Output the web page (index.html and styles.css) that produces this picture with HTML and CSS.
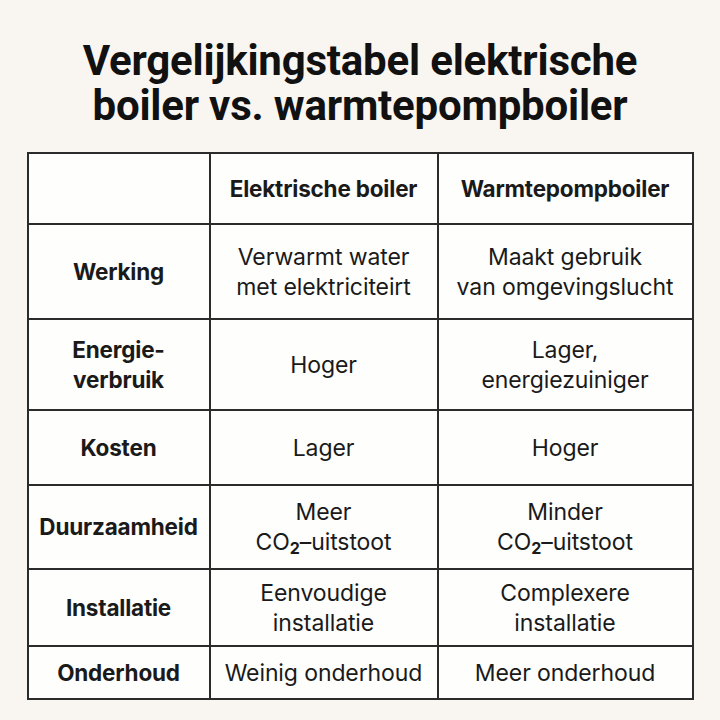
FILE: index.html
```html
<!DOCTYPE html>
<html lang="nl">
<head>
<meta charset="utf-8">
<title>Vergelijkingstabel</title>
<link rel="stylesheet" href="styles.css">
</head>
<body>
<main class="page">
  <h1 class="title">Vergelijkingstabel elektrische<br>boiler vs. warmtepompboiler</h1>
  <table class="cmp">
    <colgroup>
      <col class="c1"><col class="c2"><col class="c3">
    </colgroup>
    <thead>
      <tr class="r-head">
        <th></th>
        <th>Elektrische boiler</th>
        <th>Warmtepompboiler</th>
      </tr>
    </thead>
    <tbody>
      <tr class="r1">
        <th>Werking</th>
        <td>Verwarmt water<br>met elektriciteirt</td>
        <td>Maakt gebruik<br>van omgevingslucht</td>
      </tr>
      <tr class="r2">
        <th>Energie-<br>verbruik</th>
        <td>Hoger</td>
        <td>Lager,<br>energiezuiniger</td>
      </tr>
      <tr class="r3">
        <th>Kosten</th>
        <td>Lager</td>
        <td>Hoger</td>
      </tr>
      <tr class="r4">
        <th>Duurzaamheid</th>
        <td>Meer<br>CO<sub>2</sub>–uitstoot</td>
        <td>Minder<br>CO<sub>2</sub>–uitstoot</td>
      </tr>
      <tr class="r5">
        <th>Installatie</th>
        <td>Eenvoudige<br>installatie</td>
        <td>Complexere<br>installatie</td>
      </tr>
      <tr class="r6">
        <th>Onderhoud</th>
        <td>Weinig onderhoud</td>
        <td>Meer onderhoud</td>
      </tr>
    </tbody>
  </table>
</main>
</body>
</html>
```

FILE: styles.css
```css
html, body {
  margin: 0;
  padding: 0;
  background: #f9f6f1;
}
.page {
  width: 720px;
  height: 720px;
  display: flex;
  flex-direction: column;
  align-items: center;
}
.title {
  margin: 38px 0 0 0;
  font-family: Roboto, "Liberation Sans", sans-serif;
  font-weight: 700;
  font-size: 42px;
  line-height: 45px;
  letter-spacing: -0.2px;
  color: #111;
  text-align: center;
}
.cmp {
  margin-top: 24px;
  margin-left: 0;
  border-collapse: collapse;
  table-layout: fixed;
  width: 665px;
  background: #fefefd;
  color: #1a1a1a;
  font-family: Inter, "Liberation Sans", sans-serif;
}
.c1 { width: 182px; }
.c2 { width: 228px; }
.c3 { width: 255px; }
.cmp th, .cmp td {
  border: 2px solid #2b2b2b;
  text-align: center;
  vertical-align: middle;
  padding: 0;
}
.cmp th {
  font-weight: 700;
  font-size: 22.5px;
  line-height: 30px;
  letter-spacing: -0.2px;
}
.cmp td {
  font-weight: 400;
  font-size: 23px;
  line-height: 30px;
  letter-spacing: -0.1px;
}
.cmp thead th {
  font-size: 22.5px;
}
.cmp sub {
  font-size: 16px;
  font-weight: 700;
  vertical-align: -4px;
  line-height: 0;
}
.r-head { height: 71px; }
.r1 { height: 95px; }
.r2 { height: 91px; }
.r3 { height: 75px; }
.r4 { height: 84px; }
.r5 { height: 77px; }
.r6 { height: 53px; }
```
